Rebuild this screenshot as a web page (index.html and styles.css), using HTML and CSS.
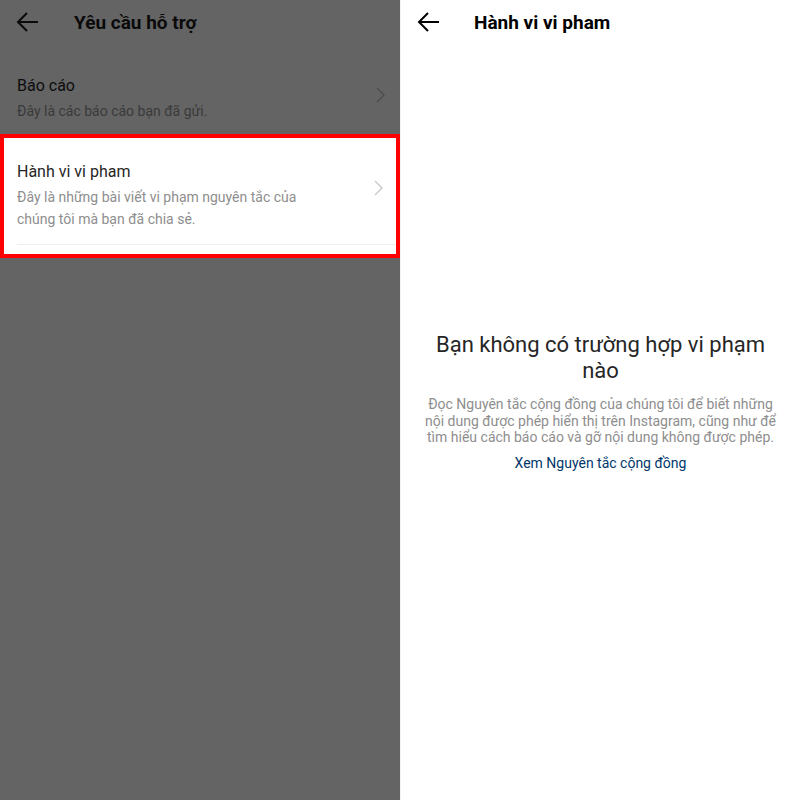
FILE: index.html
```html
<!DOCTYPE html>
<html>
	<head>
		<meta charset="UTF-8">
		<title>Hành vi vi phạm</title>
		<link rel="stylesheet" href="styles.css">
	</head>
	<body>
		<div class="screens">
			<!-- màn hình trái: Yêu cầu hỗ trợ -->
			<div class="panel dim">
				<div class="header">
					<svg class="back" width="24" height="24" viewBox="0 0 24 24"><path d="M22 12H2M11 3l-9 9 9 9" fill="none" stroke="currentColor" stroke-width="2"/></svg>
					<h3 class="title">Yêu cầu hỗ trợ</h3>
				</div>

				<div class="item">
					<div class="text">
						<p class="name">Báo cáo</p>
						<p class="desc">Đây là các báo cáo bạn đã gửi.</p>
					</div>
					<svg class="chev" width="10" height="16" viewBox="0 0 10 16"><path d="M1 1l7 7-7 7" fill="none" stroke="currentColor" stroke-width="1.3"/></svg>
				</div>

				<div class="item active">
					<div class="text">
						<p class="name">Hành vi vi pham</p>
						<p class="desc">Đây là những bài viết vi phạm nguyên tắc của<br>chúng tôi mà bạn đã chia sẻ.</p>
					</div>
					<svg class="chev" width="10" height="16" viewBox="0 0 10 16"><path d="M1 1l7 7-7 7" fill="none" stroke="currentColor" stroke-width="1.3"/></svg>
				</div>
			</div>

			<!-- màn hình phải: Hành vi vi phạm -->
			<div class="panel light">
				<div class="header">
					<svg class="back" width="24" height="24" viewBox="0 0 24 24"><path d="M22 12H2M11 3l-9 9 9 9" fill="none" stroke="currentColor" stroke-width="2"/></svg>
					<h3 class="title">Hành vi vi pham</h3>
				</div>

				<div class="empty">
					<h2 class="heading">Bạn không có trường hợp vi phạm nào</h2>
					<p class="info">Đọc Nguyên tắc cộng đồng của chúng tôi để biết những nội dung được phép hiển thị trên Instagram, cũng như để tìm hiểu cách báo cáo và gỡ nội dung không được phép.</p>
					<a href="#" class="link">Xem Nguyên tắc cộng đồng</a>
				</div>
			</div>
		</div>
	</body>
</html>
```

FILE: styles.css
```css
*{
	margin: 0;
	padding: 0;
	box-sizing: border-box;
}
body{
	font-family: Roboto, "Noto Sans", "Liberation Sans", sans-serif;
	color: #262626;
}
.screens{
	display: flex;
	width: 800px;
	height: 800px;
}
.panel{
	width: 400px;
	height: 800px;
}
.panel.dim{
	background: #646464;
}
.panel.light{
	background: #fff;
	border-left: 1px solid #f2f2f2;
}
.header{
	display: flex;
	align-items: center;
	height: 44px;
	padding-left: 16px;
}
.header .back{
	color: #000;
	margin-right: 34px;
}
.light .header .back{
	margin-right: 33px;
}
.header .title{
	font-size: 19px;
	font-weight: bold;
	color: #000;
}
.dim .header .title,.dim .header .back{
	color: #0a0a0a;
}
.item{
	display: flex;
	align-items: center;
	padding: 18px 14px 0 17px;
	height: 90px;
}
.item .text{
	flex: 1;
}
.item .name{
	font-size: 16px;
	line-height: 22px;
	color: #0c0c0c;
}
.item .desc{
	font-size: 14px;
	line-height: 22px;
	margin-top: 3px;
	color: #3a3a3a;
}
.item .chev{
	color: #4c4c4c;
	margin-top: -6px;
}
.item.active{
	background: #fff;
	border: 4px solid #ff0000;
	height: 124px;
	padding: 23px 12px 0 13px;
	display: block;
	position: relative;
}
.item.active .text{
	border-bottom: 1px solid #efefef;
	padding-bottom: 14px;
	margin-right: -12px;
}
.item.active .name{
	color: #262626;
}
.item.active .desc{
	color: #8e8e8e;
}
.item.active .chev{
	position: absolute;
	right: 12px;
	top: 48px;
	color: #c7c7c7;
}
.empty{
	padding: 288px 20px 0;
	text-align: center;
}
.empty .heading{
	font-size: 22px;
	font-weight: normal;
	line-height: 26px;
	color: #262626;
}
.empty .info{
	font-size: 14px;
	line-height: 16.5px;
	color: #8e8e8e;
	margin-top: 12px;
}
.empty .link{
	display: inline-block;
	margin-top: 9px;
	font-size: 14px;
	line-height: 17px;
	color: #00376b;
	text-decoration: none;
}
```
